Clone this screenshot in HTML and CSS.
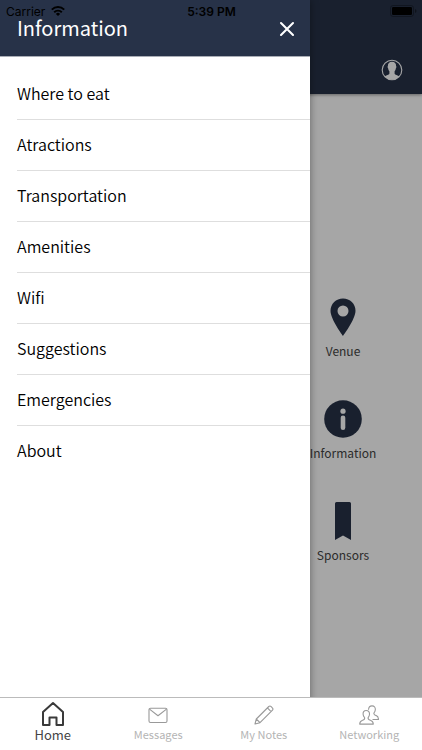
FILE: index.html
```html
<!DOCTYPE html>
<html lang="en">
<head>
<meta charset="utf-8">
<meta name="viewport" content="width=device-width, initial-scale=1">
<title>Information</title>
<link rel="stylesheet" href="styles.css">
</head>
<body>
<div class="screen">
  <header class="app-header">
    <button class="icon-button profile" type="button" aria-label="Profile">
      <svg width="22" height="22" viewBox="0 0 22 22"><circle cx="11" cy="11" r="9.8" fill="none" stroke="#fff" stroke-width="1.1"/><path fill="#fff" d="M11 2.8c2.8 0 4.2 1.7 4.1 4.2.5.4.4 1.8-.3 2.4-.2 1.5-.7 2.3-1.2 2.800v2.200c0 1.400 3.200 1.700 4.800 2.900C16.600 19.700 14 20.800 11 20.800S5.400 19.700 3.600 17.300c1.600-1.200 4.800-1.500 4.800-2.900v-2.200c-.5-.5-1-1.300-1.200-2.800-.7-.6-.8-2-.3-2.400C6.800 4.500 8.200 2.800 11 2.800z"/></svg>
    </button>
  </header>

  <main class="tiles">
    <a class="tile" href="#venue">
      <svg width="38" height="38" viewBox="0 0 38 38"><path fill="#273248" fill-rule="evenodd" d="M19 .5C12 .5 6.500 5.900 6.500 12.800 6.500 21.500 19 38 19 38s12.500-16.500 12.500-25.200C31.500 5.900 26 .5 19 .5zm0 7a5.500 5.500 0 1 1 0 11 5.500 5.500 0 0 1 0-11z"/></svg>
      <span>Venue</span>
    </a>
    <a class="tile" href="#information">
      <svg width="38" height="38" viewBox="0 0 38 38"><circle cx="19" cy="19" r="18.800" fill="#273248"/><circle cx="19" cy="11.200" r="2.600" fill="#fff"/><rect x="16.700" y="15.500" width="4.600" height="14.500" rx="2.300" fill="#fff"/></svg>
      <span>Information</span>
    </a>
    <a class="tile" href="#sponsors">
      <svg width="38" height="38" viewBox="0 0 38 38"><path fill="#273248" d="M12.500 0h13q1.500 0 1.500 1.500V38l-8-4.500L11 38V1.500Q11 0 12.500 0z"/></svg>
      <span>Sponsors</span>
    </a>
  </main>

  <div class="shade"></div>

  <aside class="drawer">
    <header class="drawer-header">
      <h1>Information</h1>
      <button class="icon-button" type="button" aria-label="Close">
        <svg width="16" height="16" viewBox="0 0 16 16"><path d="M2 2l12 12M14 2L2 14" stroke="#fff" stroke-width="2.100" stroke-linecap="round"/></svg>
      </button>
    </header>
    <nav>
      <ul class="menu">
        <li><a href="#eat">Where to eat</a></li>
        <li><a href="#atractions">Atractions</a></li>
        <li><a href="#transportation">Transportation</a></li>
        <li><a href="#amenities">Amenities</a></li>
        <li><a href="#wifi">Wifi</a></li>
        <li><a href="#suggestions">Suggestions</a></li>
        <li><a href="#emergencies">Emergencies</a></li>
        <li><a href="#about">About</a></li>
      </ul>
    </nav>
  </aside>

  <nav class="tabs">
    <a class="tab active" href="#home">
      <svg width="24" height="25" viewBox="0 0 24 25"><path fill="none" stroke="#3a3a3a" stroke-width="2" stroke-linejoin="round" d="M2 11L12 2l10 9v13h-6.500v-7.500h-7V24H2z"/></svg>
      <span>Home</span>
    </a>
    <a class="tab" href="#messages">
      <svg width="20" height="20" viewBox="0 0 20 20"><g fill="none" stroke="#999" stroke-width="1.100" stroke-linejoin="round"><rect x="1" y="3.300" width="18" height="14.200" rx="1.500"/><path d="M1.500 4.100L10 10.800l8.500-6.700"/></g></svg>
      <span>Messages</span>
    </a>
    <a class="tab" href="#notes">
      <svg width="20" height="20" viewBox="0 0 20 20"><path fill="none" stroke="#999" stroke-width="1.100" stroke-linejoin="round" d="M1 19l1.300-5L14.800 1.500q1.200-1 2.400.2l1.100 1.100q1.200 1.200.2 2.400L6 17.700zM2.300 14L6 17.700M13.400 2.900l3.700 3.700"/></svg>
      <span>My Notes</span>
    </a>
    <a class="tab" href="#networking">
      <svg width="20" height="20" viewBox="0 0 20 20"><g fill="none" stroke="#999" stroke-width="1.100" stroke-linejoin="round"><path d="M7.200 5.500c2.400 0 3.500 1.600 3.300 3.800-.1 1.800-.8 2.500-1.400 3.300-.3 1.500.3 2 2.300 2.600 2.200.700 2.800 1.500 2.900 3.900H.7c.1-2.400.7-3.200 2.900-3.900 2-.6 2.400-1.100 2-2.600-.8-.8-1.400-1.500-1.500-3.300-.2-2.200.7-3.800 3.100-3.800z"/><path d="M9.500 4.700C9.700 2.200 10.900.9 13 .9c2.400 0 3.500 1.600 3.300 3.800-.1 1.800-.8 2.500-1.400 3.300-.3 1.500.3 2 2.300 2.600 1.600.600 2.200 1.500 2.300 3.900h-6"/></g></svg>
      <span>Networking</span>
    </a>
  </nav>

  <div class="status">
    <span class="carrier">Carrier
      <svg width="14" height="10" viewBox="0 0 14 10"><g fill="none" stroke="#000" stroke-width="2"><path d="M.8 3.600a9 9 0 0 1 12.400 0M3.200 6.200a5.500 5.500 0 0 1 7.600 0"/></g><path d="M7 10L4.900 7.900a3 3 0 0 1 4.200 0z"/></svg>
    </span>
    <time>5:39 PM</time>
    <svg class="battery" width="27" height="12" viewBox="0 0 27 12"><rect x=".5" y=".5" width="23" height="11" rx="2.500" fill="none" stroke="#000" stroke-opacity=".3"/><rect x="2" y="2" width="20" height="8" rx="1.300"/><path d="M25 4q1.500.5 1.500 2T25 8z" opacity=".4"/></svg>
  </div>
</div>
</body>
</html>
```
FILE: styles.css
```css
* {
  box-sizing: border-box;
}

body {
  margin: 0;
  font-family: "Noto Sans CJK SC", "Noto Sans", sans-serif;
  color: #000;
}

a {
  color: inherit;
  text-decoration: none;
}

svg {
  display: block;
  flex: none;
}

.screen {
  position: relative;
  display: flex;
  flex-direction: column;
  min-height: 100vh;
  background: #fff;
  overflow: hidden;
}

.icon-button {
  padding: 0;
  border: 0;
  background: none;
  cursor: pointer;
}

.app-header {
  display: flex;
  justify-content: flex-end;
  align-items: flex-end;
  height: 94px;
  padding: 0 19px 13px;
  background: #273248;
  box-shadow: 0 1px 3px rgba(0, 0, 0, 0.4);
}

.tiles {
  flex: 1;
  display: flex;
  flex-direction: column;
  align-items: flex-end;
  justify-content: flex-end;
  gap: 39px;
  padding: 0 12px 132px;
}

.tile {
  display: flex;
  flex-direction: column;
  align-items: center;
  gap: 5px;
  width: 134px;
  font-size: 12px;
  line-height: 20px;
  color: #444;
}

.shade {
  position: absolute;
  inset: 0;
  background: rgba(0, 0, 0, 0.35);
}

.drawer {
  position: absolute;
  inset: 0 112px 0 0;
  background: #fff;
  box-shadow: 0 0 8px rgba(0, 0, 0, 0.4);
}

.drawer-header {
  display: flex;
  justify-content: space-between;
  align-items: center;
  height: 57px;
  padding: 2px 15px 0 17px;
  background: #273248;
  border-bottom: 1px solid #a9adb6;
}

.drawer-header h1 {
  margin: 0;
  padding-bottom: 2px;
  font-size: 20px;
  line-height: 30px;
  font-weight: 400;
  color: #fff;
}

.menu {
  margin: 0;
  padding: 12px 0 0 17px;
  list-style: none;
}

.menu li {
  border-bottom: 1px solid #dedede;
}

.menu li:last-child {
  border-bottom: 0;
}

.menu a {
  display: block;
  padding-bottom: 2px;
  font-size: 16px;
  font-weight: 350;
  line-height: 48px;
}

.tabs {
  position: relative;
  display: grid;
  grid-template-columns: repeat(4, 1fr);
  height: 53px;
  padding-bottom: 7px;
  background: #fff;
  border-top: 1px solid #bbb;
}

.tab {
  display: flex;
  flex-direction: column;
  align-items: center;
  justify-content: flex-end;
  gap: 1px;
  font-size: 11px;
  line-height: 17px;
  color: #b4b4b4;
}

.tab.active {
  gap: 0;
  font-size: 13px;
  color: #444;
}

.status {
  position: absolute;
  inset: 0 0 auto;
  display: grid;
  grid-template-columns: 1fr auto 1fr;
  align-items: center;
  height: 22px;
  padding: 0 5px 0 6px;
  font-family: Inter, "Liberation Sans", sans-serif;
  font-size: 12px;
}

.carrier {
  display: flex;
  align-items: center;
  gap: 6px;
}

.status time {
  font-weight: 600;
}

.battery {
  justify-self: end;
}
```
